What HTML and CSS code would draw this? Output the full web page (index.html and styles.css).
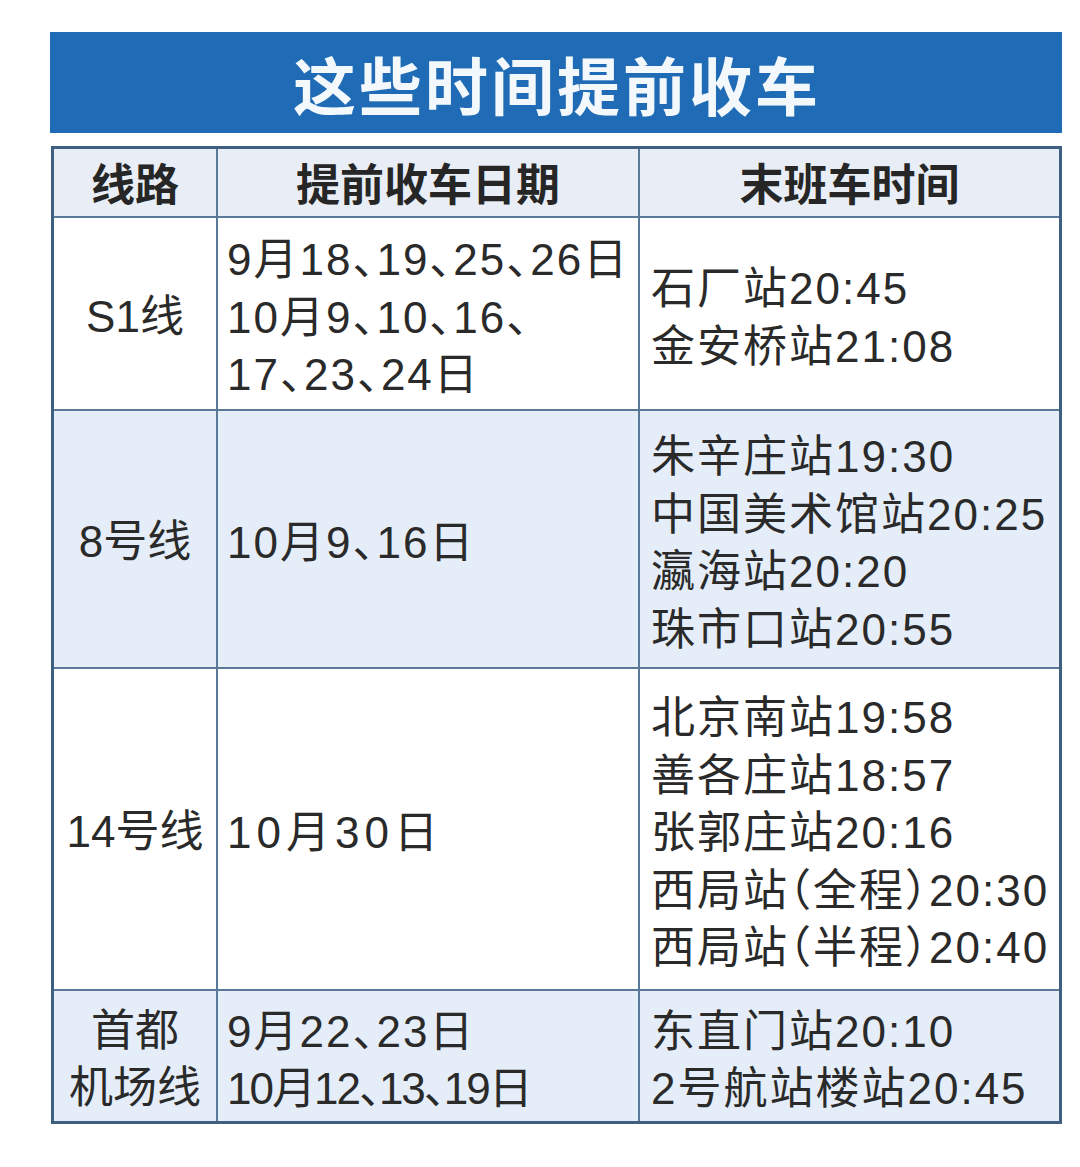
FILE: index.html
```html
<!DOCTYPE html>
<html lang="zh-CN">
<head>
<meta charset="utf-8">
<title>这些时间提前收车</title>
<link rel="stylesheet" href="styles.css">
</head>
<body>
<div class="page">
  <div class="banner"><h1 class="title">这些时间提前收车</h1></div>
  <div class="table">
    <div class="cell head c1">线路</div>
    <div class="cell head c2">提前收车日期</div>
    <div class="cell head c3">末班车时间</div>

    <div class="cell line c1 white"><div class="txt">S1线</div></div>
    <div class="cell body c2 white"><div class="txt">9月18、19、25、26日<br>10月9、10、16、<br>17、23、24日</div></div>
    <div class="cell body c3 white"><div class="txt">石厂站20:45<br>金安桥站21:08</div></div>

    <div class="cell line c1 tint"><div class="txt">8号线</div></div>
    <div class="cell body c2 tint"><div class="txt">10月9、16日</div></div>
    <div class="cell body c3 tint"><div class="txt">朱辛庄站19:30<br>中国美术馆站20:25<br>瀛海站20:20<br>珠市口站20:55</div></div>

    <div class="cell line c1 white"><div class="txt">14号线</div></div>
    <div class="cell body c2 white"><div class="txt loose">10月30日</div></div>
    <div class="cell body c3 white"><div class="txt">北京南站19:58<br>善各庄站18:57<br>张郭庄站20:16<br>西局站（全程）20:30<br>西局站（半程）20:40</div></div>

    <div class="cell line c1 tint last"><div class="txt">首都<br>机场线</div></div>
    <div class="cell body c2 tint last"><div class="txt">9月22、23日<br><span class="tight">10月12、13、19日</span></div></div>
    <div class="cell body c3 tint last"><div class="txt">东直门站20:10<br>2号航站楼站20:45</div></div>
  </div>
</div>
</body>
</html>
```

FILE: styles.css
```css
html, body {
  margin: 0;
  padding: 0;
  background: #ffffff;
}

.page {
  width: 1012px;
  padding: 32px 0 0 50px;
  display: flex;
  flex-direction: column;
  gap: 13px;
  font-family: "Liberation Sans", "Noto Sans CJK SC", sans-serif;
  color: #2a2a2a;
}

.banner {
  height: 101px;
  background: #1f6bb5;
  display: flex;
  align-items: center;
  justify-content: center;
}

.title {
  margin: 0;
  padding-left: 2px;
  font-family: "Noto Sans CJK SC", sans-serif;
  font-weight: 700;
  font-size: 63px;
  line-height: 1;
  letter-spacing: 3px;
  color: #f2f8fc;
}

.table {
  box-sizing: border-box;
  height: 978px;
  margin-left: 1px;
  border: 3px solid #3f5f80;
  display: grid;
  grid-template-columns: 164px 422px 1fr;
  grid-template-rows: 69px 193px 258px 322px 1fr;
}

.cell {
  border-right: 2px solid #5a7898;
  border-bottom: 2px solid #5a7898;
  display: flex;
  align-items: center;
  font-size: 44px;
  line-height: 57.5px;
  letter-spacing: 2px;
  font-feature-settings: "halt";
}

.c3 { border-right: none; }
.last { border-bottom: none; }

.head {
  justify-content: center;
  background: #e9eef6;
  font-family: "Noto Sans CJK SC", sans-serif;
  font-weight: 700;
  letter-spacing: 0;
  color: #262626;
}

.line {
  justify-content: center;
  text-align: center;
  letter-spacing: 0;
  padding-top: 6px;
}

.txt { white-space: nowrap; }

.body { padding-top: 8px; }
.body.c2 { padding-left: 9px; }
.body.c3 { padding-left: 11px; }

.loose { letter-spacing: 5px; }
.tight { letter-spacing: -2px; }

.white { background: #ffffff; }
.tint { background: #e5edf8; }
```
